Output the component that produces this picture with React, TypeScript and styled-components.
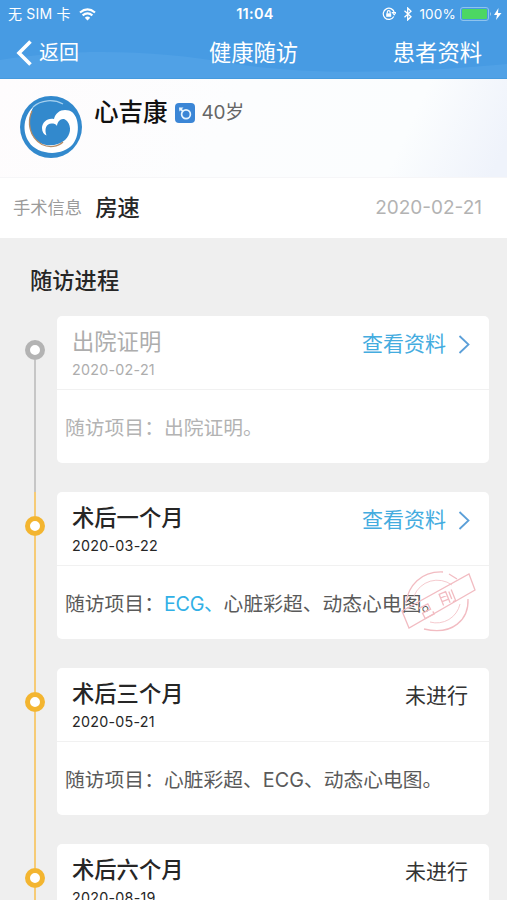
import React from "react";
import styled, { createGlobalStyle } from "styled-components";

const Global = createGlobalStyle`
  * { box-sizing: border-box; }
  html, body { margin: 0; padding: 0; background: #efefef; }
  body { font-family: Inter, "Noto Sans CJK SC", sans-serif; color: #262626; }
  svg { display: block; flex: none; }
`;

const Screen = styled.div`
  width: 507px;
  height: 900px;
  overflow: hidden;
  display: flex;
  flex-direction: column;
`;

const Header = styled.header`
  position: relative;
  flex: none;
  height: 79px;
  color: #fff;
  background: #479be3;
  border-bottom: 1px solid #459ade;
`;

const Wave = styled.svg`
  position: absolute;
  left: 0;
  bottom: 0;
`;

const StatusBar = styled.div`
  position: relative;
  height: 27px;
  padding: 0 5px 0 8px;
  display: grid;
  grid-template-columns: 1fr auto 1fr;
  align-items: center;
  font-size: 13.5px;
  line-height: 28px;
`;

const StatusGroup = styled.div<{ $end?: boolean }>`
  display: flex;
  align-items: center;
  justify-content: ${(p) => (p.$end ? "flex-end" : "flex-start")};
  white-space: pre;
  letter-spacing: 0.2px;
`;

const Carrier = styled.span`
  margin-right: 8px;
  font-size: 14px;
`;

const Clock = styled.div`
  font-weight: 600;
  font-size: 14.5px;
  letter-spacing: 0.3px;
`;

const Battery = styled.div`
  width: 29px;
  height: 14px;
  margin-left: 4px;
  padding: 1px;
  border: 1px solid #8fc3ee;
  border-radius: 3px;
`;

const Charge = styled.div`
  height: 100%;
  border-radius: 1px;
  background: #4cd763;
`;

const NavBar = styled.nav`
  position: relative;
  height: 51px;
  padding: 0 25px 0 16px;
  display: grid;
  grid-template-columns: 1fr auto 1fr;
  align-items: center;
  line-height: 50px;
  font-size: 22.3px;
`;

const Back = styled.div`
  display: flex;
  align-items: center;
  gap: 7px;
  font-size: 20px;
`;

const NavTitle = styled.div`
  padding-left: 9px;
`;

const NavAction = styled.div`
  text-align: right;
`;

const Patient = styled.section`
  flex: none;
  height: 99px;
  padding: 17px 20px 0;
  display: flex;
  gap: 12px;
  border-bottom: 1px solid #f6f6f8;
  background: linear-gradient(115deg, #fefcfd 0%, #fcfdfe 45%, #fbfdfe 78%, #eff3fb 97%);
`;

const PatientLine = styled.div`
  height: 33px;
  display: flex;
  align-items: center;
`;

const PatientName = styled.div`
  font-size: 24.5px;
  line-height: 33px;
  font-weight: 500;
  color: #111;
`;

const Gender = styled.div`
  width: 20px;
  height: 20px;
  margin: 0 7px;
  border-radius: 4px;
  background: #3b86d6;
`;

const Age = styled.div`
  font-size: 19px;
  line-height: 32px;
  letter-spacing: -0.2px;
  color: #666;
`;

const Surgery = styled.section`
  flex: none;
  height: 60px;
  padding: 0 25px 0 13px;
  display: flex;
  align-items: center;
  background: #fff;
  line-height: 60px;
`;

const SurgeryLabel = styled.span`
  font-size: 17.3px;
  color: #9b9b9b;
`;

const SurgeryName = styled.span`
  flex: 1;
  margin-left: 13px;
  font-size: 22.3px;
  font-weight: 500;
`;

const SurgeryDate = styled.span`
  font-size: 19px;
  color: #b3b3b3;
`;

const SectionTitle = styled.h2`
  flex: none;
  margin: 0;
  height: 78px;
  padding: 28px 0 0 30px;
  font-size: 22.3px;
  line-height: 30px;
  font-weight: 500;
`;

const Timeline = styled.div`
  flex: none;
`;

const Step = styled.div`
  height: 176px;
  padding-right: 18px;
  display: grid;
  grid-template-columns: 57px 1fr;
`;

const Rail = styled.div<{ $first?: boolean; $color: string }>`
  display: flex;
  flex-direction: column;
  align-items: center;
  width: 70px;
  &::before {
    content: "";
    width: 2px;
    height: 24px;
    background: ${(p) => (p.$first ? "transparent" : p.$color)};
  }
  &::after {
    content: "";
    width: 2px;
    flex: 1;
    background: ${(p) => p.$color};
  }
`;

const Dot = styled.div<{ $color: string }>`
  width: 20px;
  height: 20px;
  border: 5px solid ${(p) => p.$color};
  border-radius: 50%;
  background: #fff;
`;

const Card = styled.article<{ $muted?: boolean }>`
  position: relative;
  height: 147px;
  border-radius: 5px;
  background: #fff;
  color: ${(p) => (p.$muted ? "#adadad" : "#262626")};
`;

const CardHead = styled.div`
  height: 74px;
  padding: 11px 19px 0 15px;
  display: flex;
  justify-content: space-between;
  border-bottom: 1px solid #f1f1f1;
`;

const CardTitle = styled.div<{ $muted?: boolean }>`
  font-size: 22.3px;
  line-height: 30px;
  font-weight: ${(p) => (p.$muted ? 400 : 500)};
`;

const CardDate = styled.div`
  font-size: 14.3px;
  line-height: 26px;
  letter-spacing: 0.25px;
`;

const ViewLink = styled.div`
  display: flex;
  align-items: center;
  gap: 12px;
  height: 34px;
  font-size: 21px;
  line-height: 34px;
  color: #44acdf;
`;

const Status = styled.div`
  height: 34px;
  padding-right: 2px;
  font-size: 21px;
  line-height: 34px;
  color: #333;
`;

const Items = styled.div<{ $muted?: boolean }>`
  padding-left: 8px;
  font-size: 19.8px;
  line-height: 76px;
  height: 73px;
  white-space: nowrap;
  color: ${(p) => (p.$muted ? "#b3b3b3" : "#5a5a5a")};
`;

const Accent = styled.span`
  color: #31b0e6;
  letter-spacing: -0.3px;
`;

const Stamp = styled.svg`
  position: absolute;
  right: 13px;
  top: 76px;
`;

const Logo = () => (
  <svg width="62" height="62" viewBox="0 0 62 62">
    <circle cx="31" cy="31" r="31" fill="#3289cd" />
    <path
      d="M14 10C3 20 2 36 9 46C16 58 41 62 53 48C61 38 59 17 49 14.500C42 12.500 35.500 16 34 23C28 21.500 22 26 22 32C22 36 24 38.500 26.500 39.500C24 33 26.500 27.500 31.500 27.500C34 27.500 36 28 37 30C37.500 24 43 20.500 47 25C52 31 50.500 39 45 44C34 53 19 50 13 40C8 31 8 20 14 10Z"
      fill="#fff"
    />
    <path d="M12 15C7 26 9 41 22 48.500C29 52 38 51 43 46" fill="none" stroke="#b48b65" strokeWidth="1.3" />
    <path d="M13 11C21 3.500 34 3 43 8" fill="none" stroke="#a5d0ef" strokeWidth="1.2" />
  </svg>
);

const GenderIcon = () => (
  <svg width="20" height="20" viewBox="0 0 20 20" fill="none" stroke="#e6f5ff" strokeWidth="1.7">
    <circle cx="11" cy="11.300" r="4.400" />
    <path d="M8 8.300 5 5.300" />
    <path d="M4 4.500H8.500L4.500 8.500Z" fill="#e6f5ff" stroke="none" />
  </svg>
);

const StampMark = () => (
  <Stamp width="76" height="70" viewBox="0 0 76 70" fill="none" stroke="#f2bcc2" strokeWidth="1.3">
    <path d="M6 35C8 18 21 3 43 4M49 6l8 5M68 31C69 51 53 68 24 61" />
    <path d="M14 28A25 25 0 0 1 52 17M60 36A24 24 0 0 1 30 54" strokeWidth="0.8" />
    <path d="M2 43 69 6l6 16L9 60Z" />
    <g transform="translate(27 43) rotate(-27)" strokeWidth="1.3">
      <path d="M-6-6H4V0H-5V6H5V3" />
    </g>
    <g transform="translate(46 30) rotate(-22)" strokeWidth="1.3">
      <path d="M-5 6V-6H2V6M-5-2H2M-5 2H2M5-5V3M8-6V6H5" />
    </g>
  </Stamp>
);

const GREY = { dot: "#b3b3b3", line: "#c6c6c6" };
const GOLD = { dot: "#f3b530", line: "#f6cb76" };

interface Entry {
  title: string;
  date: string;
  accent?: string;
  items: string;
  done: boolean;
  muted?: boolean;
  stamped?: boolean;
}

const entries: Entry[] = [
  { title: "出院证明", date: "2020-02-21", items: "出院证明。", done: true, muted: true },
  { title: "术后一个月", date: "2020-03-22", accent: "ECG、", items: "心脏彩超、动态心电图。", done: true, stamped: true },
  { title: "术后三个月", date: "2020-05-21", items: "心脏彩超、ECG、动态心电图。", done: false },
  { title: "术后六个月", date: "2020-08-19", items: "", done: false },
];

export default function App() {
  return (
    <Screen>
      <Global />
      <Header>
        <Wave width="507" height="28" viewBox="0 0 507 28">
          <path d="M0 10C80-3 160 1 230 13S400 24 507 14V28H0Z" fill="#50a1e6" />
        </Wave>
        <StatusBar>
          <StatusGroup>
            <Carrier>无 SIM 卡</Carrier>
            <svg width="17" height="13" viewBox="0 0 17 13" fill="none" stroke="#fff" strokeWidth="2.100">
              <path d="M1 4.500Q8.500-1.800 16 4.500M3.600 7.400Q8.500 3.300 13.400 7.400" />
              <path d="M5.800 9.700Q8.500 7.400 11.200 9.700L8.500 12.500Z" fill="#fff" stroke="none" />
            </svg>
          </StatusGroup>
          <Clock>11:04</Clock>
          <StatusGroup $end>
            <svg width="14" height="14" viewBox="0 0 14 14" fill="none" stroke="#fff" strokeWidth="1.200">
              <path d="M11.800 9.500A5.600 5.600 0 1 1 12.400 6M10.500 5.500h3.400l-1.700 2.300Z" />
              <path d="M4.200 6.300h5v3.500h-5Z" fill="#fff" stroke="none" />
              <path d="M5.300 6.500V5a1.400 1.400 0 0 1 2.800 0v1.500" />
            </svg>
            <svg width="23" height="14" viewBox="0 0 23 14" fill="none" stroke="#fff" strokeWidth="1.300">
              <path d="M8.500 3.800l6.500 6L11.700 13V1l3.300 3.200-6.500 6" />
            </svg>
            <span>100%</span>
            <Battery><Charge /></Battery>
            <svg width="13" height="14" viewBox="0 0 13 14" fill="#fff">
              <path d="M1 5q2 2 0 4Z" fill="#a9d0f1" />
              <path d="M9.500 1 5 8h3l-1 5 5.500-7H9Z" />
            </svg>
          </StatusGroup>
        </StatusBar>
        <NavBar>
          <Back>
            <svg width="16" height="26" viewBox="0 0 16 26" fill="none" stroke="#fff" strokeWidth="3.600">
              <path d="M14.500 1.500 3 13l11.500 11.500" />
            </svg>
            返回
          </Back>
          <NavTitle>健康随访</NavTitle>
          <NavAction>患者资料</NavAction>
        </NavBar>
      </Header>
      <Patient>
        <Logo />
        <PatientLine>
          <PatientName>心吉康</PatientName>
          <Gender><GenderIcon /></Gender>
          <Age>40岁</Age>
        </PatientLine>
      </Patient>
      <Surgery>
        <SurgeryLabel>手术信息</SurgeryLabel>
        <SurgeryName>房速</SurgeryName>
        <SurgeryDate>2020-02-21</SurgeryDate>
      </Surgery>
      <SectionTitle>随访进程</SectionTitle>
      <Timeline>
        {entries.map((e, i) => {
          const tone = e.muted ? GREY : GOLD;
          return (
            <Step key={e.title}>
              <Rail $first={i === 0} $color={tone.line}>
                <Dot $color={tone.dot} />
              </Rail>
              <Card $muted={e.muted}>
                <CardHead>
                  <div>
                    <CardTitle $muted={e.muted}>{e.title}</CardTitle>
                    <CardDate>{e.date}</CardDate>
                  </div>
                  {e.done ? (
                    <ViewLink>
                      查看资料
                      <svg width="12" height="19" viewBox="0 0 12 19" fill="none" stroke="#5b9fd8" strokeWidth="1.800">
                        <path d="M1.500 1 10.500 9.500 1.500 18" />
                      </svg>
                    </ViewLink>
                  ) : (
                    <Status>未进行</Status>
                  )}
                </CardHead>
                {e.items && (
                  <Items $muted={e.muted}>
                    随访项目：{e.accent && <Accent>{e.accent}</Accent>}
                    {e.items}
                  </Items>
                )}
                {e.stamped && <StampMark />}
              </Card>
            </Step>
          );
        })}
      </Timeline>
    </Screen>
  );
}
